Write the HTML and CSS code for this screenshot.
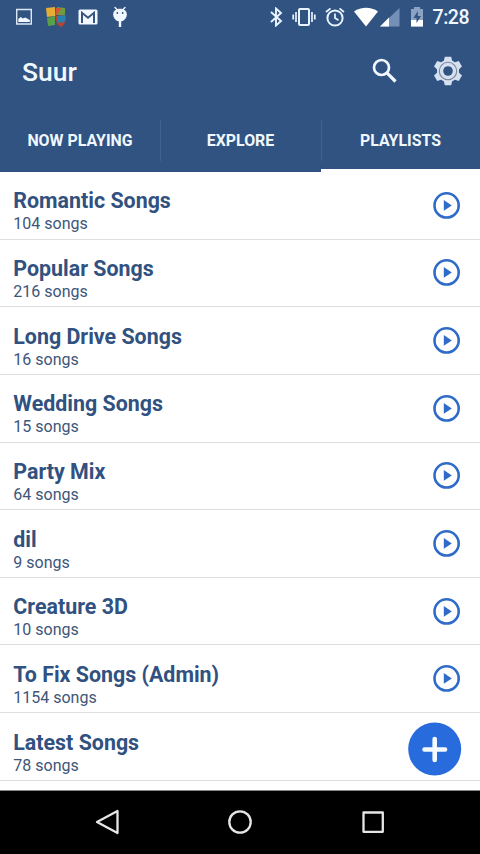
FILE: index.html
```html
<!DOCTYPE html>
<html lang="en">
<head>
<meta charset="utf-8">
<title>Suur</title>
<link rel="stylesheet" href="styles.css">
</head>
<body>
<svg class="defs" width="0" height="0">
  <symbol id="play" viewBox="0 0 28 28"><circle cx="13.600" cy="14.400" r="12.100" fill="none" stroke="#2f6bc8" stroke-width="2.600"/><path d="M10.800 9v10.800l8-5.400z" fill="#2f6bc8"/></symbol>
</svg>
<header class="header">
  <div class="status">
    <div class="notifications">
      <svg width="18" height="18" viewBox="0 0 18 18"><path d="M1.700 1.500h14.600v14.500H1.700z" fill="none" stroke="#dce8f5" stroke-width="1.400"/><path d="M3.300 14v-3l2.500-2 2 1.500 2.500-1 4.500 2.500V14z" fill="#f2f8ff"/></svg>
      <svg width="22" height="22" viewBox="0 0 22 22"><path d="M1 2l9-1v9l-8 1z" fill="#e6ae35"/><path d="M12 1l8 1v8l-8-1z" fill="#6f9b43"/><path d="M2 12l8-2v9l-7 1z" fill="#58a14a"/><path d="M11 2l5 0-3 6-3 2z" fill="#d65532"/><path d="M10.500 9.500c4 1.500 5-1 10 0 1 6-1 9-4 11.500-4-1-6-5-6-11.500z" fill="#b6442e"/><path d="M12.500 10c3 .5 5-1.500 8-.5.300 3-.5 5-1.500 7h-6z" fill="#277fb4"/></svg>
      <svg width="20" height="16" viewBox="0 0 20 16"><rect x=".5" y=".5" width="19" height="15" rx="1.500" fill="#f2f8ff"/><path d="M4 14V3.800l6 5 6-5V14" fill="none" stroke="#36547f" stroke-width="2"/></svg>
      <svg class="android" width="16" height="22" viewBox="0 0 16 22"><path d="M3 1.500l2.500 2.500M13 1.500l-2.500 2.500" stroke="#f2f8ff" stroke-width="1.400" stroke-linecap="round"/><path d="M8 2.800c4 0 6.800 2.200 6.800 5.700S12 15.500 8 15.500 1.200 12 1.200 8.500 4 2.800 8 2.800z" fill="#f2f8ff"/><path d="M6.800 14h2.400v7H6.800z" fill="#f2f8ff"/><circle cx="5.300" cy="7" r=".9" fill="#315381"/><circle cx="10.700" cy="7" r=".9" fill="#315381"/></svg>
    </div>
    <div class="system">
      <svg class="bluetooth" width="14" height="20" viewBox="0 0 14 20"><path d="M2 5l10 9-5 4.500V1.500L12 6 2 15" fill="none" stroke="#e8f4ff" stroke-width="1.900"/></svg>
      <svg class="vibrate" width="24" height="20" viewBox="0 0 24 20"><rect x="7" y="2" width="10" height="16" rx="1" fill="none" stroke="#e8f4ff" stroke-width="2"/><path d="M4 5v10M20 5v10M1.200 7.500v5M22.800 7.500v5" stroke="#e8f4ff" stroke-width="1.700"/></svg>
      <svg class="alarm" width="20" height="20" viewBox="0 0 20 20"><circle cx="10" cy="11" r="7.600" fill="none" stroke="#e8f4ff" stroke-width="2"/><path d="M1 5l4.500-3.700M19 5l-4.500-3.700M10 6.500V11l3.500 2.300" fill="none" stroke="#e8f4ff" stroke-width="1.700"/></svg>
      <svg class="wifi" width="24" height="20" viewBox="0 0 24 20"><path d="M0 4.500C7-.4 17-.4 24 4.500L12 19.500z" fill="#fff"/></svg>
      <svg class="signal" width="20" height="20" viewBox="0 0 20 20"><path d="M0 19.500L19.500 1v18.500z" fill="#7490b8"/><path d="M0 19.500l9-9v9z" fill="#fff"/></svg>
      <svg class="battery" width="14" height="20" viewBox="0 0 14 20"><path d="M1 2h3V0h6v2h3v17.500H1z" fill="#8ba2c2"/><path d="M1 13h12v6.500H1z" fill="#fff"/><path d="M7.800 4L3.500 11h3v5l4.500-7H7.800z" fill="#315381"/></svg>
      <span class="time">7:28</span>
    </div>
  </div>
  <div class="appbar">
    <h1>Suur</h1>
    <svg class="search" width="26" height="26" viewBox="0 0 26 26"><circle cx="9.500" cy="9.500" r="7.500" fill="none" stroke="#f2f8ff" stroke-width="2.700"/><path d="M14.700 14.700l8.800 8.800" stroke="#f2f8ff" stroke-width="3.200"/></svg>
    <svg width="30" height="32" viewBox="-15 -16 30 32"><g fill="#d5e0f1"><circle r="11"/><path id="tooth" d="M-4.400-9l1.200-5.300h6.400L4.400-9v18l-1.200 5.300h-6.400L-4.400 9z"/><use href="#tooth" transform="rotate(60)"/><use href="#tooth" transform="rotate(120)"/></g><circle r="8.700" fill="none" stroke="#7b8798" stroke-width="1.100"/><circle r="4.800" fill="#315381"/></svg>
  </div>
  <nav class="tabs">
    <div class="tab">NOW PLAYING</div>
    <div class="tab">EXPLORE</div>
    <div class="tab active">PLAYLISTS</div>
  </nav>
</header>
<main class="list">
  <div class="row"><div><h2>Romantic Songs</h2><p>104 songs</p></div><svg class="play"><use href="#play"/></svg></div>
  <div class="row"><div><h2>Popular Songs</h2><p>216 songs</p></div><svg class="play"><use href="#play"/></svg></div>
  <div class="row"><div><h2>Long Drive Songs</h2><p>16 songs</p></div><svg class="play"><use href="#play"/></svg></div>
  <div class="row"><div><h2>Wedding Songs</h2><p>15 songs</p></div><svg class="play"><use href="#play"/></svg></div>
  <div class="row"><div><h2>Party Mix</h2><p>64 songs</p></div><svg class="play"><use href="#play"/></svg></div>
  <div class="row"><div><h2>dil</h2><p>9 songs</p></div><svg class="play"><use href="#play"/></svg></div>
  <div class="row"><div><h2>Creature 3D</h2><p>10 songs</p></div><svg class="play"><use href="#play"/></svg></div>
  <div class="row"><div><h2>To Fix Songs (Admin)</h2><p>1154 songs</p></div><svg class="play"><use href="#play"/></svg></div>
  <div class="row"><div><h2>Latest Songs</h2><p>78 songs</p></div></div>
  <svg class="fab" width="54" height="54" viewBox="0 0 54 54"><circle cx="26.700" cy="27" r="26.500" fill="#276bdd"/><path d="M26.700 17v21M16.500 27.500h20.600" stroke="#f4f9ff" stroke-width="4.600" stroke-linecap="round"/></svg>
</main>
<footer class="navbar">
  <svg width="26" height="28" viewBox="0 0 26 28"><path d="M3 14L23.500 3v22z" fill="none" stroke="#e6e6e6" stroke-width="2.300" stroke-linejoin="round"/></svg>
  <svg width="26" height="28" viewBox="0 0 26 28"><circle cx="13" cy="14" r="10.700" fill="none" stroke="#e6e6e6" stroke-width="2.300"/></svg>
  <svg width="26" height="28" viewBox="0 0 26 28"><rect x="3.500" y="4.500" width="19.300" height="19.300" fill="none" stroke="#e6e6e6" stroke-width="2.300" stroke-linejoin="round"/></svg>
</footer>
</body>
</html>
```
FILE: styles.css
```css
* { box-sizing: border-box; }
body {
  margin: 0;
  width: 480px;
  height: 854px;
  display: flex;
  flex-direction: column;
  overflow: hidden;
  background: #fff;
  font-family: Roboto, "Liberation Sans", sans-serif;
}
svg { display: block; flex: none; }
h1, h2, p { margin: 0; white-space: nowrap; }
.defs { position: absolute; }
.header { height: 172px; flex: none; background: #315381; color: #f0f8ff; }
.status { height: 34px; display: flex; justify-content: space-between; padding: 0 11px 0 15px; }
.notifications, .system { display: flex; align-items: center; }
.notifications { gap: 12px; }
.notifications svg:nth-child(3) { margin-left: -1px; }
.notifications .android { margin-left: 2px; }
.vibrate { margin-left: 9px; }
.alarm { margin-left: 9px; }
.wifi { margin-left: 9px; }
.signal { margin-left: 2px; }
.battery { margin-left: 10px; }
.time { margin-left: 9px; padding-top: 1px; font-size: 19.5px; letter-spacing: -0.5px; line-height: 34px; font-weight: 500; }
.appbar { height: 76px; display: flex; align-items: center; padding: 0 17px 3px 22px; }
.appbar h1 { font-size: 26.5px; font-weight: 500; line-height: 36px; padding-top: 2px; flex: 1; }
.search { margin-right: 35px; }
.tabs { height: 62px; display: grid; grid-template-columns: 160px 161px 159px; }
.tab {
  position: relative;
  height: 62px;
  text-align: center;
  font-size: 15.9px;
  line-height: 59px;
  padding-top: 1px;
  font-weight: 700;
}
.tab + .tab::before {
  content: "";
  position: absolute;
  left: 0;
  top: 10px;
  width: 1px;
  height: 41px;
  background: #42618d;
}
.tab.active { border-bottom: 3px solid #fff; }
.list { position: relative; flex: 1; border-bottom: 1px solid #888; }
.row {
  height: 67.65px;
  display: flex;
  justify-content: space-between;
  padding: 16.4px 19px 0 13.3px;
  border-bottom: 1px solid #dedede;
}
.row h2 { font-size: 21.4px; font-weight: 700; line-height: 26px; color: #315180; }
.row p { font-size: 16px; line-height: 20px; color: #3d5679; }
.play { width: 28px; height: 28px; margin-top: 2.4px; }
.fab { position: absolute; right: 18px; bottom: 14px; }
.navbar {
  height: 63px;
  flex: none;
  background: #000;
  display: flex;
  justify-content: center;
  align-items: center;
  gap: 107px;
  padding-bottom: 1px;
}
```
